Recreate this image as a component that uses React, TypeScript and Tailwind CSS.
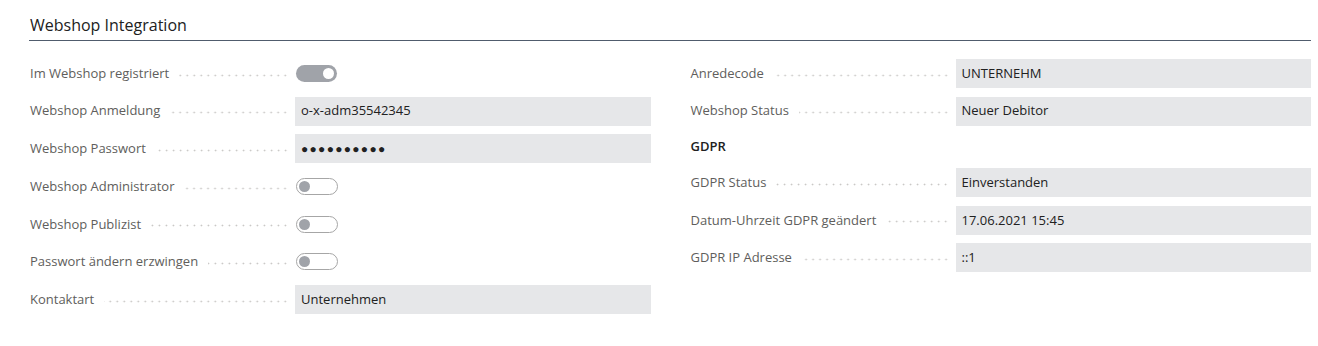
import React from 'react'

type Field =
  | { kind: 'toggle'; label: string; on: boolean }
  | { kind: 'text'; label: string; value: string }
  | { kind: 'password'; label: string }
  | { kind: 'heading'; label: string }

const leftFields: Field[] = [
  { kind: 'toggle', label: 'Im Webshop registriert', on: true },
  { kind: 'text', label: 'Webshop Anmeldung', value: 'o-x-adm35542345' },
  { kind: 'password', label: 'Webshop Passwort' },
  { kind: 'toggle', label: 'Webshop Administrator', on: false },
  { kind: 'toggle', label: 'Webshop Publizist', on: false },
  { kind: 'toggle', label: 'Passwort ändern erzwingen', on: false },
  { kind: 'text', label: 'Kontaktart', value: 'Unternehmen' },
]

const rightFields: Field[] = [
  { kind: 'text', label: 'Anredecode', value: 'UNTERNEHM' },
  { kind: 'text', label: 'Webshop Status', value: 'Neuer Debitor' },
  { kind: 'heading', label: 'GDPR' },
  { kind: 'text', label: 'GDPR Status', value: 'Einverstanden' },
  { kind: 'text', label: 'Datum-Uhrzeit GDPR geändert', value: '17.06.2021 15:45' },
  { kind: 'text', label: 'GDPR IP Adresse', value: '::1' },
]

function Toggle({ on }: { on: boolean }) {
  if (on) {
    return (
      <div className="w-[41px] h-[17px] rounded-full bg-[#a0a3a9] flex items-center justify-end px-[3px]">
        <div className="w-[11px] h-[11px] rounded-full bg-white" />
      </div>
    )
  }
  return (
    <div className="w-[42px] h-[17px] rounded-full border border-[#a6a6a6] bg-white flex items-center px-[2px]">
      <div className="w-[11px] h-[11px] rounded-full bg-[#a0a3a9]" />
    </div>
  )
}

function Row({ field }: { field: Field }) {
  if (field.kind === 'heading') {
    return (
      <div className="h-[25px] flex items-center text-[13px] font-semibold text-[#212121]">
        {field.label}
      </div>
    )
  }

  return (
    <div className="h-[29px] flex items-center">
      <div className="w-[265px] flex items-center pr-[6px] shrink-0">
        <span className="text-[13px] text-[#605e5c] whitespace-nowrap">{field.label}</span>
        <div className="flex-1 ml-[10px] h-[3px] mt-[3px] bg-[radial-gradient(circle,#c6c4c2_0.8px,transparent_1.1px)] bg-[length:7px_3px] bg-repeat-x bg-right" />
      </div>
      {field.kind === 'toggle' && (
        <div className="flex-1 pl-[1px]">
          <Toggle on={field.on} />
        </div>
      )}
      {field.kind === 'text' && (
        <div className="flex-1 h-[29px] bg-[#e6e7e9] flex items-center px-[6px] text-[13px] text-[#212121]">
          {field.value}
        </div>
      )}
      {field.kind === 'password' && (
        <div className="flex-1 h-[29px] bg-[#e6e7e9] flex items-center px-[6px] text-[12px] tracking-[1.3px] text-[#212121] font-['Liberation_Sans',sans-serif]">
          ●●●●●●●●●●
        </div>
      )}
    </div>
  )
}

export default function App() {
  return (
    <div className="w-[1318px] h-[346px] bg-white pl-[30px] pr-[7px] pt-[14px] font-['Open_Sans',sans-serif]">
      <div className="border-b border-[#505c6d] pb-[4px] -ml-[1px] pl-[1px]">
        <h2 className="text-[16px] text-[#212121] font-medium leading-[22px]">Webshop Integration</h2>
      </div>
      <div className="grid grid-cols-2 gap-x-[40px] mt-[18px]">
        <div className="flex flex-col gap-[8.7px]">
          {leftFields.map((f) => (
            <Row key={f.label} field={f} />
          ))}
        </div>
        <div className="flex flex-col gap-[8.7px]">
          {rightFields.map((f) => (
            <Row key={f.label} field={f} />
          ))}
        </div>
      </div>
    </div>
  )
}
